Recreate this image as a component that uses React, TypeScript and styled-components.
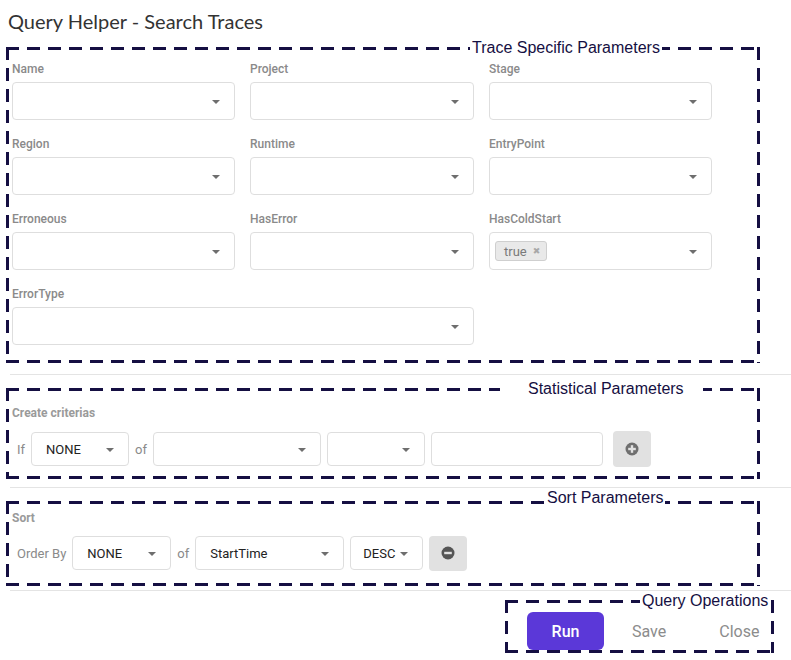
import React from "react";
import styled, { createGlobalStyle } from "styled-components";

const Global = createGlobalStyle`
  html, body { margin: 0; padding: 0; background: #ffffff; }
  body { font-family: Roboto, "Liberation Sans", Arial, sans-serif; color: #333; }
  * { box-sizing: border-box; }
`;

const NAVY = "#150f42";
const dash = (dir: string) =>
  `repeating-linear-gradient(${dir}, ${NAVY} 0 13px, transparent 13px 21px)`;

const Page = styled.div`
  width: 791px;
  height: 660px;
  padding-top: 9px;
  display: flex;
  flex-direction: column;
  overflow: hidden;
`;

const Title = styled.h1`
  margin: 0 0 14px 8px;
  font-family: Lato, "Open Sans", sans-serif;
  font-size: 20px;
  line-height: 24px;
  font-weight: 400;
  color: #333;
`;

const Frame = styled.section<{ $pad: string; $w: number; $ml?: number }>`
  position: relative;
  width: ${(p) => p.$w}px;
  margin-left: ${(p) => p.$ml ?? 6}px;
  padding: ${(p) => p.$pad};
  background:
    ${dash("to right")} top left / 100% 3px no-repeat,
    ${dash("to right")} bottom left / 100% 3px no-repeat,
    ${dash("to bottom")} top left / 3px 100% no-repeat,
    ${dash("to bottom")} top right / 3px 100% no-repeat;
`;

const Legend = styled.span<{ $left: number; $top?: number; $pl?: number; $pr?: number }>`
  position: absolute;
  left: ${(p) => p.$left}px;
  top: ${(p) => p.$top ?? -8}px;
  padding: 0 ${(p) => p.$pr ?? 2}px 0 ${(p) => p.$pl ?? 2}px;
  background: #fff;
  font-family: "Liberation Sans", Arial, sans-serif;
  font-size: 16px;
  line-height: 18px;
  color: ${NAVY};
  white-space: nowrap;
`;

const Grid = styled.div`
  display: grid;
  grid-template-columns: 223px 224px 223px;
  column-gap: 15px;
  row-gap: 16px;
`;

const Field = styled.div<{ $span?: number }>`
  display: flex;
  flex-direction: column;
  grid-column: span ${(p) => p.$span ?? 1};
`;

const Label = styled.label<{ $gap?: number; $bold?: boolean }>`
  display: block;
  font-size: 12px;
  line-height: 16px;
  font-weight: ${(p) => (p.$bold ? 700 : 500)};
  color: ${(p) => (p.$bold ? "#9a9a9a" : "#8a8a8a")};
  margin-bottom: ${(p) => p.$gap ?? 5}px;
`;

const SelectBox = styled.div<{ $h?: number; $w?: number; $pl?: number }>`
  position: relative;
  display: flex;
  align-items: center;
  height: ${(p) => p.$h ?? 38}px;
  width: ${(p) => (p.$w ? `${p.$w}px` : "100%")};
  flex: none;
  padding-left: ${(p) => p.$pl ?? 14}px;
  padding-right: 30px;
  border: 1px solid #dedede;
  border-radius: 4px;
  background: #fff;
  font-size: 13px;
  color: #333;
`;

const Caret = styled.span<{ $r?: number }>`
  position: absolute;
  right: ${(p) => p.$r ?? 14}px;
  top: 50%;
  margin-top: -1px;
  width: 0;
  height: 0;
  border-left: 4px solid transparent;
  border-right: 4px solid transparent;
  border-top: 4px solid #6e6e6e;
`;

const Value = styled.span`
  font-weight: 400;
  color: #222;
`;

const Tag = styled.span`
  display: inline-flex;
  align-items: center;
  gap: 6px;
  height: 20px;
  margin-left: -9px;
  padding: 0 6px 0 8px;
  background: #e9e9e9;
  border: 1px solid #cfcfcf;
  border-radius: 3px;
  font-size: 13px;
  color: #7a7a7a;
`;

const TagX = styled.span`
  font-family: "DejaVu Sans", sans-serif;
  font-size: 9px;
  color: #a8a8a8;
`;

const Separator = styled.hr<{ $mt: number; $mb: number }>`
  border: none;
  height: 1px;
  background: #e4e4e4;
  margin: ${(p) => p.$mt}px 0 ${(p) => p.$mb}px 10px;
  width: 781px;
`;

const Row = styled.div<{ $pl?: number; $gap: number }>`
  display: flex;
  align-items: center;
  gap: ${(p) => p.$gap}px;
  padding-left: ${(p) => p.$pl ?? 5}px;
  height: 36px;
`;

const RowText = styled.span`
  font-size: 13px;
  color: #8a8a8a;
`;

const TextInput = styled.div<{ $w: number }>`
  width: ${(p) => p.$w}px;
  height: 34px;
  border: 1px solid #dedede;
  border-radius: 4px;
  background: #fff;
`;

const IconButton = styled.button<{ $ml?: number; $h?: number }>`
  width: 38px;
  height: ${(p) => p.$h ?? 36}px;
  margin-left: ${(p) => p.$ml ?? 0}px;
  border: none;
  border-radius: 4px;
  background: #e1e1e1;
  display: flex;
  align-items: center;
  justify-content: center;
  padding: 0;
`;

const Footer = styled.div`
  display: flex;
  justify-content: flex-end;
  margin-top: 9px;
  padding-right: 17px;
`;

const Ops = styled.div`
  display: flex;
  align-items: center;
`;

const RunButton = styled.button`
  width: 77px;
  height: 38px;
  margin-left: -1px;
  border: none;
  border-radius: 6px;
  background: #5b38d8;
  color: #fff;
  font-family: Roboto, sans-serif;
  font-size: 16px;
  font-weight: 500;
`;

const TextButton = styled.button<{ $ml: number }>`
  margin-left: ${(p) => p.$ml}px;
  border: none;
  background: transparent;
  padding: 0;
  font-family: Roboto, sans-serif;
  font-size: 16px;
  color: #8c8c8c;
`;

const CircleIcon = ({ plus }: { plus: boolean }) => (
  <svg width="14" height="14" viewBox="0 0 14 14">
    <circle cx="7" cy="7" r="6.5" fill={plus ? "#6f6f6f" : "#555"} />
    <rect x="3.2" y="5.8" width="7.6" height="2.4" fill="#e1e1e1" />
    {plus && <rect x="5.8" y="3.2" width="2.4" height="7.6" fill="#e1e1e1" />}
  </svg>
);

const Select = ({ children, ...rest }: { children?: React.ReactNode; $h?: number; $w?: number; $pl?: number }) => (
  <SelectBox {...rest}>
    {children}
    <Caret />
  </SelectBox>
);

const fields: { label: string; span?: number; tag?: string }[] = [
  { label: "Name" },
  { label: "Project" },
  { label: "Stage" },
  { label: "Region" },
  { label: "Runtime" },
  { label: "EntryPoint" },
  { label: "Erroneous" },
  { label: "HasError" },
  { label: "HasColdStart", tag: "true" },
  { label: "ErrorType", span: 2 },
];

export default function App() {
  return (
    <Page>
      <Global />
      <Title>Query Helper - Search Traces</Title>

      <Frame $w={754} $pad="14px 3px 18px 6px">
        <Legend $left={464}>Trace Specific Parameters</Legend>
        <Grid>
          {fields.map((f) => (
            <Field key={f.label} $span={f.span}>
              <Label>{f.label}</Label>
              <Select>
                {f.tag && (
                  <Tag>
                    {f.tag} <TagX>✖</TagX>
                  </Tag>
                )}
              </Select>
            </Field>
          ))}
        </Grid>
      </Frame>

      <Separator $mt={11} $mb={13} />

      <Frame $w={754} $pad="17px 3px 12px 6px">
        <Legend $left={494} $pl={28} $pr={19}>Statistical Parameters</Legend>
        <Label $bold $gap={10}>Create criterias</Label>
        <Row $gap={6} $pl={5}>
          <RowText>If</RowText>
          <Select $h={34} $w={98}>
            <Value>NONE</Value>
          </Select>
          <RowText>of</RowText>
          <Select $h={34} $w={168} />
          <Select $h={34} $w={98} />
          <TextInput $w={172} />
          <IconButton $ml={4}>
            <CircleIcon plus />
          </IconButton>
        </Row>
      </Frame>

      <Separator $mt={8} $mb={13} />

      <Frame $w={754} $pad="9px 3px 15px 6px">
        <Legend $left={539} $top={-12}>Sort Parameters</Legend>
        <Label $bold $gap={9}>Sort</Label>
        <Row $gap={6}>
          <RowText>Order By</RowText>
          <Select $h={34} $w={99}>
            <Value>NONE</Value>
          </Select>
          <RowText>of</RowText>
          <Select $h={34} $w={149}>
            <Value>StartTime</Value>
          </Select>
          <Select $h={34} $w={73} $pl={12}>
            <Value>DESC</Value>
          </Select>
          <IconButton $h={35}>
            <CircleIcon plus={false} />
          </IconButton>
        </Row>
      </Frame>

      <Separator $mt={4} $mb={0} />

      <Footer>
        <Frame $w={269} $ml={0} $pad="12px 3px 3px 23px">
          <Legend $left={135}>Query Operations</Legend>
          <Ops>
            <RunButton>Run</RunButton>
            <TextButton $ml={28}>Save</TextButton>
            <TextButton $ml={53}>Close</TextButton>
          </Ops>
        </Frame>
      </Footer>
    </Page>
  );
}
